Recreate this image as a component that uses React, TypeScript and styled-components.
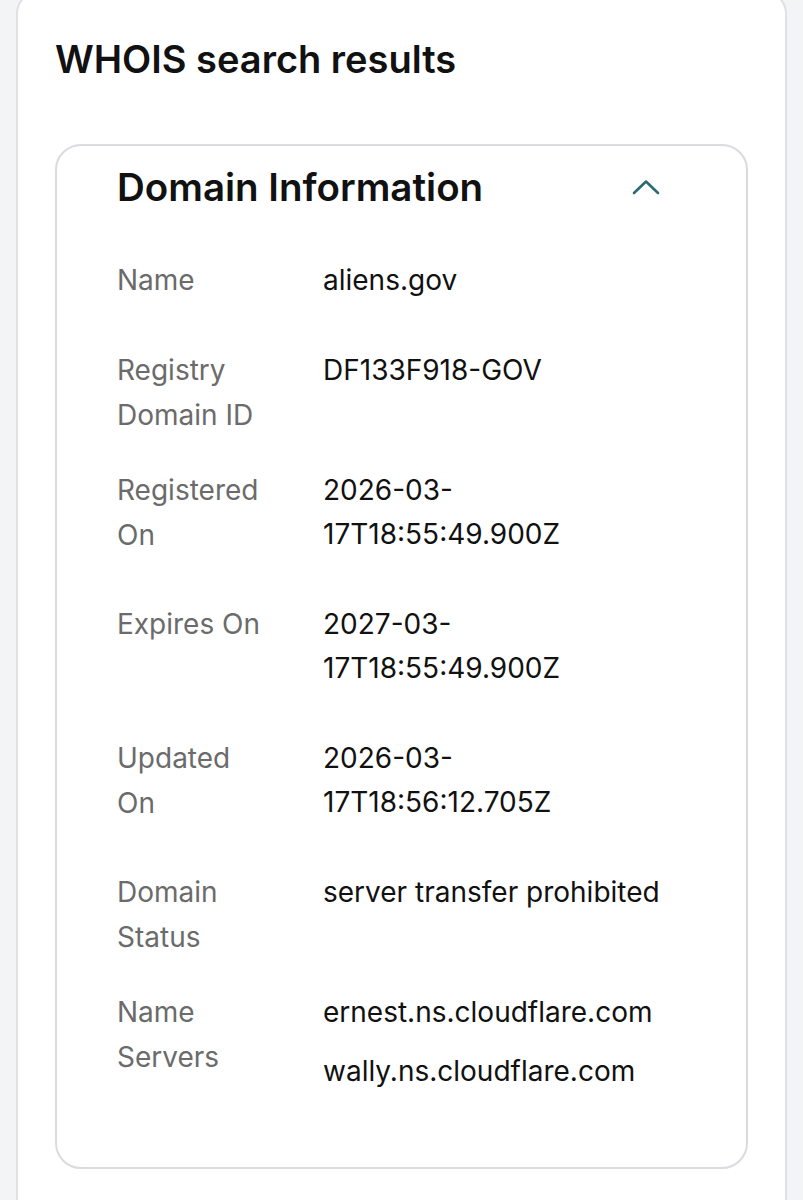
import React from "react";
import styled, { createGlobalStyle } from "styled-components";

const GlobalStyle = createGlobalStyle`
  html, body { margin: 0; padding: 0; background: #f3f4f6; }
  body {
    font-family: Inter, Roboto, "Liberation Sans", Arial, sans-serif;
    color: #111;
    -webkit-font-smoothing: antialiased;
  }
  * { box-sizing: border-box; }
`;

const Page = styled.main`
  padding: 0 16px;
  overflow: hidden;
  height: 1200px;
`;

const Panel = styled.section`
  margin-top: -10px;
  background: #fff;
  border: 2px solid #dfe1e5;
  border-radius: 24px;
  padding: 43px 37px 60px;
  min-height: 1300px;
`;

const Title = styled.h1`
  margin: 0 0 61px;
  font-size: 38px;
  font-weight: 600;
  line-height: 48px;
  color: #111;
`;

const Card = styled.div`
  border: 2px solid #d9dbdf;
  border-radius: 26px;
  padding: 0 60px 28px;
`;

const CardHeader = styled.div`
  display: flex;
  align-items: center;
  justify-content: space-between;
  padding: 17px 0;
`;

const CardTitle = styled.h2`
  margin: 0;
  font-size: 38.5px;
  font-weight: 600;
  line-height: 48px;
  color: #111;
`;

const Toggle = styled.button`
  display: flex;
  align-items: center;
  justify-content: center;
  width: 40px;
  height: 40px;
  margin-right: 20px;
  padding: 0;
  border: 0;
  background: none;
  color: #2b6b73;
  cursor: pointer;
`;

const List = styled.dl`
  margin: 30px 0 0;
`;

const Row = styled.div`
  display: grid;
  grid-template-columns: 150px 350px;
  column-gap: 56px;
  align-items: start;
`;

const Label = styled.dt`
  margin: 0;
  padding-bottom: 30px;
  font-size: 28px;
  line-height: 45px;
  color: #6b6b6b;
`;

const Value = styled.dd`
  margin: 0;
  padding-bottom: 45px;
  font-size: 28px;
  line-height: 44.5px;
  color: #111;
  display: flex;
  flex-direction: column;
  gap: 15px;
`;

const Line = styled.span`
  display: block;
`;

const rows: { label: string; values: string[] }[] = [
  { label: "Name", values: ["aliens.gov"] },
  { label: "Registry Domain ID", values: ["DF133F918-GOV"] },
  { label: "Registered On", values: ["2026-03-17T18:55:49.900Z"] },
  { label: "Expires On", values: ["2027-03-17T18:55:49.900Z"] },
  { label: "Updated On", values: ["2026-03-17T18:56:12.705Z"] },
  { label: "Domain Status", values: ["server transfer prohibited"] },
  { label: "Name Servers", values: ["ernest.ns.cloudflare.com", "wally.ns.cloudflare.com"] },
];

const ChevronUp = () => (
  <svg width="28" height="16" viewBox="0 0 28 16" fill="none" aria-hidden="true">
    <polyline
      points="2,14 14,2.5 26,14"
      stroke="currentColor"
      strokeWidth="2.6"
      strokeLinecap="round"
      strokeLinejoin="round"
    />
  </svg>
);

export default function App() {
  return (
    <>
      <GlobalStyle />
      <Page>
        <Panel>
          <Title>WHOIS search results</Title>
          <Card>
            <CardHeader>
              <CardTitle>Domain Information</CardTitle>
              <Toggle aria-label="Collapse">
                <ChevronUp />
              </Toggle>
            </CardHeader>
            <List>
              {rows.map((r) => (
                <Row key={r.label}>
                  <Label>{r.label}</Label>
                  <Value>
                    {r.values.map((v) => (
                      <Line key={v}>{v}</Line>
                    ))}
                  </Value>
                </Row>
              ))}
            </List>
          </Card>
        </Panel>
      </Page>
    </>
  );
}
